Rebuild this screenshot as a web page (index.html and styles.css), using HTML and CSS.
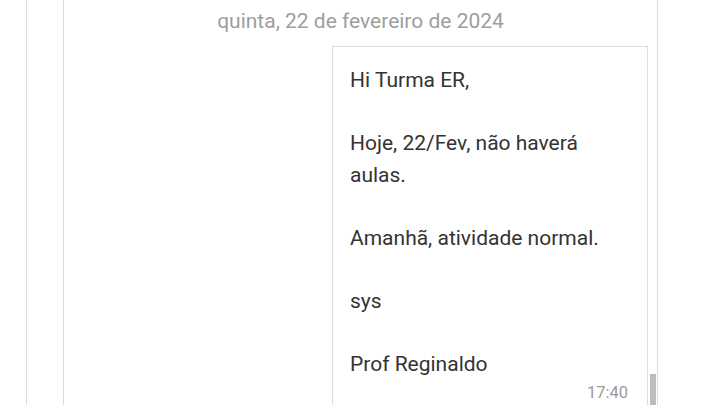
FILE: index.html
```html
<!DOCTYPE html>
<html lang="pt">
<head>
<meta charset="utf-8">
<link rel="stylesheet" href="styles.css">
</head>
<body>
<div class="outer">
  <div class="panel">
    <div class="date">quinta, 22 de fevereiro de 2024</div>
    <div class="row">
      <div class="bubble">
        <p class="msg">Hi Turma ER,<br><br>Hoje, 22/Fev, não haverá aulas.<br><br>Amanhã, atividade normal.<br><br>sys<br><br>Prof Reginaldo</p>
        <div class="time">17:40</div>
      </div>
    </div>
    <div class="thumb"></div>
  </div>
</div>
</body>
</html>
```
FILE: styles.css
```css
html, body {
  margin: 0;
  padding: 0;
  background: #fff;
  height: 100%;
  overflow: hidden;
}
body {
  font-family: Roboto, "Noto Sans", sans-serif;
  color: #333;
}
.outer {
  margin-left: 26px;
  width: 667px;
  height: 405px;
  border-left: 1px solid #dcdcdc;
  border-right: 1px solid #dcdcdc;
  padding-left: 36px;
}
.panel {
  position: relative;
  display: flex;
  flex-direction: column;
  width: 593px;
  height: 405px;
  border-left: 1px solid #dcdcdc;
  border-right: 1px solid #dcdcdc;
}
.date {
  text-align: center;
  font-size: 21px;
  color: #9e9e9e;
  padding-top: 8px;
  line-height: 26px;
  height: 38px;
}
.row {
  flex: 1;
  display: flex;
  justify-content: flex-end;
  padding-right: 9px;
}
.bubble {
  width: 279px;
  border: 1px solid #dedede;
  border-bottom: none;
  padding: 18px 18px 0 17px;
}
.msg {
  margin: 0;
  font-size: 21px;
  line-height: 31.6px;
  color: #333;
}
.time {
  text-align: right;
  font-size: 16.5px;
  color: #9a9a9a;
  margin-top: 2px;
  margin-right: 1px;
}
.thumb {
  position: absolute;
  right: 1px;
  top: 374px;
  width: 6px;
  height: 40px;
  background: #bdbdbd;
}
```
